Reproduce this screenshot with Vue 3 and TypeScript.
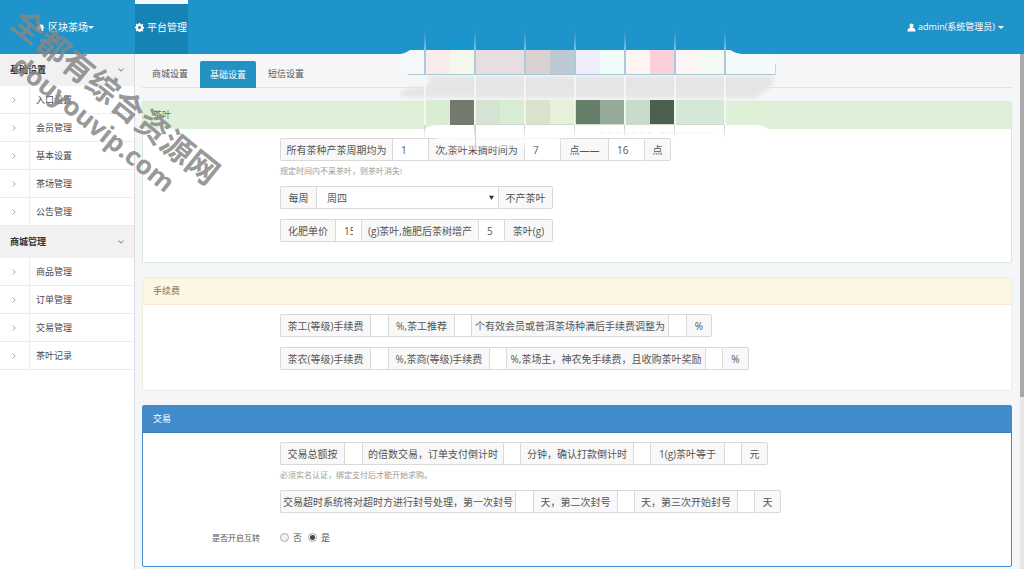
<script setup lang="ts">
import { reactive, ref } from 'vue'

interface MenuGroup { title: string; items: string[] }
interface Segment { kind: 'addon' | 'input' | 'select'; text: string; label?: string }
interface Row { id: string; segments: Segment[]; help?: string }
interface Panel { id: string; title: string; rows: Row[] }

const menu: MenuGroup[] = [
  { title: '基础设置', items: ['入口设置', '会员管理', '基本设置', '茶场管理', '公告管理'] },
  { title: '商城管理', items: ['商品管理', '订单管理', '交易管理', '茶叶记录'] },
]

const tabs = ['商城设置', '基础设置', '短信设置']
const activeTab = ref('基础设置')
const transfer = ref('yes')

const a = (text: string): Segment => ({ kind: 'addon', text })
const i = (label: string, text = ''): Segment => ({ kind: 'input', text, label })

const panels = reactive<Panel[]>([
  {
    id: 'tea',
    title: '茶叶',
    rows: [
      {
        id: 'cycle',
        segments: [a('所有茶种产茶周期均为'), i('产茶周期', '1'), a('次,茶叶采摘时间为'), i('开始时间', '7'), a('点——'), i('结束时间', '16'), a('点')],
        help: '规定时间内不采茶叶，则茶叶消失!',
      },
      { id: 'weekday', segments: [a('每周'), { kind: 'select', text: '周四', label: '每周' }, a('不产茶叶')] },
      { id: 'manure', segments: [a('化肥单价'), i('化肥单价', '15'), a('(g)茶叶,施肥后茶树增产'), i('增产', '5'), a('茶叶(g)')] },
    ],
  },
  {
    id: 'fee',
    title: '手续费',
    rows: [
      { id: 'worker', segments: [a('茶工(等级)手续费'), i('茶工手续费'), a('%,茶工推荐'), i('茶工推荐'), a('个有效会员或普洱茶场种满后手续费调整为'), i('调整手续费'), a('%')] },
      { id: 'farmer', segments: [a('茶农(等级)手续费'), i('茶农手续费'), a('%,茶商(等级)手续费'), i('茶商手续费'), a('%,茶场主，神农免手续费，且收购茶叶奖励'), i('收购奖励'), a('%')] },
    ],
  },
  {
    id: 'trade',
    title: '交易',
    rows: [
      {
        id: 'multiple',
        segments: [a('交易总额按'), i('交易倍数'), a('的倍数交易，订单支付倒计时'), i('支付倒计时'), a('分钟，确认打款倒计时'), i('打款倒计时'), a('1(g)茶叶等于'), i('茶叶单价'), a('元')],
        help: '必须实名认证，绑定支付后才能开始求购。',
      },
      { id: 'ban', segments: [a('交易超时系统将对超时方进行封号处理，第一次封号'), i('第一次封号'), a('天，第二次封号'), i('第二次封号'), a('天，第三次开始封号'), i('第三次封号'), a('天')] },
    ],
  },
])

const weekdays = ['周一', '周二', '周三', '周四', '周五', '周六', '周日']

const topCells = [
  [425, 25, '#f8eced'], [450, 25, '#f3f7ec'], [475, 50, '#e8dee1'], [525, 25, '#d9d0d2'],
  [550, 25, '#bdc8d2'], [575, 25, '#efeefb'], [600, 25, '#f1fbfa'], [625, 25, '#fef5f3'],
  [650, 25, '#fccfda'], [675, 25, '#fdf4f5'], [700, 25, '#f5f9f3'], [725, 50, '#f5f9f9'],
] as const
const lowCells = [
  [425, 25, '#daedd2'], [450, 24, '#737a6e'], [475, 25, '#d5e3d2'], [500, 25, '#d9edd5'],
  [525, 25, '#dae1cc'], [550, 25, '#e6f1da'], [575, 25, '#667f68'], [600, 24, '#97aa99'],
  [625, 25, '#c8dcc9'], [650, 24, '#4c6050'], [675, 50, '#d5e8d6'],
] as const
const gridLines = [425, 475, 525, 575, 625, 675, 725]
</script>

<template>
  <div class="page">
    <header class="topbar">
      <a href="#" class="brand">
        <svg class="icon" viewBox="0 0 18 18"><path d="M9 2 1 9.4l1.2 1.3L3.4 9.600V16h4v-4.500h3.200V16h4V9.600l1.200 1.100L17 9.400l-2.500-2.300V3h-2.300v2z" /></svg>
        <span>区块茶场</span><i class="caret"></i>
      </a>
      <nav class="mainnav">
        <a href="#" class="current">
          <svg class="icon" viewBox="0 0 18 18"><path fill-rule="evenodd" d="M7.500 0h3l.5 2.500 1.500.7 2.200-1.500 2 2.100-1.400 2.100.6 1.600 2.100.5v3l-2.100.5-.7 1.500 1.500 2.200-2.100 2.100-2.100-1.500-1.500.7-.5 2.100h-3L7 16l-1.500-.7-2.200 1.500-2.100-2.100 1.500-2.200L2 11 0 10.500v-3L2.200 7l.6-1.500-1.500-2.200 2.100-2.100 2.100 1.500L7 2zM9 6a3 3 0 1 0 0 6 3 3 0 0 0 0-6z" /></svg>
          <span>平台管理</span>
        </a>
      </nav>
      <a href="#" class="user">
        <svg class="icon" viewBox="0 0 18 18"><path d="M9 1c-2.600 0-4 1.800-4 4.200 0 1.900.8 3.600 1.800 4.500C3.500 10 1 11.500 1 17h16c0-5.500-2.500-7-5.800-7.300 1-.9 1.800-2.600 1.800-4.500C13 2.800 11.600 1 9 1z" /></svg>
        <span>admin(系统管理员)</span><i class="caret"></i>
      </a>
    </header>

    <div class="body">
      <aside class="sidebar">
        <section v-for="g in menu" :key="g.title">
          <button type="button" class="group">
            <span>{{ g.title }}</span>
            <svg class="chev" viewBox="0 0 8 8"><path d="M1.500 2.500 4 5.200l2.500-2.700" /></svg>
          </button>
          <ul>
            <li v-for="item in g.items" :key="item">
              <a href="#">
                <span class="mark"><svg class="chev" viewBox="0 0 8 8"><path d="M2.500 1.500 5.200 4 2.500 6.500" /></svg></span>
                <span class="name">{{ item }}</span>
              </a>
            </li>
          </ul>
        </section>
      </aside>

      <main class="content">
        <nav class="tabs">
          <button v-for="t in tabs" :key="t" type="button" :class="{ active: t === activeTab }" @click="activeTab = t">{{ t }}</button>
        </nav>

        <form class="panels" @submit.prevent>
          <section v-for="p in panels" :key="p.id" class="panel" :class="p.id">
            <h2>{{ p.title }}</h2>
            <div class="fields">
              <div v-for="r in p.rows" :key="r.id" class="row">
                <div class="segments" :class="r.id">
                  <template v-for="(s, n) in r.segments" :key="n">
                    <span v-if="s.kind === 'addon'" class="addon">{{ s.text }}</span>
                    <input v-else-if="s.kind === 'input'" v-model="s.text" type="text" :aria-label="s.label" />
                    <span v-else class="pick">
                      <select v-model="s.text" :aria-label="s.label">
                        <option v-for="d in weekdays" :key="d">{{ d }}</option>
                      </select>
                      <svg viewBox="0 0 6 6"><path d="M0 1h6L3 6z" /></svg>
                    </span>
                  </template>
                </div>
                <p v-if="r.help" class="help">{{ r.help }}</p>
              </div>
              <div v-if="p.id === 'trade'" class="row radios" role="radiogroup" aria-labelledby="transfer-label">
                <span id="transfer-label" class="caption">是否开启互转</span>
                <label><input v-model="transfer" type="radio" name="transfer" value="no" />否</label>
                <label><input v-model="transfer" type="radio" name="transfer" value="yes" />是</label>
              </div>
            </div>
          </section>
        </form>
      </main>

      <div class="scrollbar"><div class="thumb"></div></div>
    </div>

    <svg class="mosaic" viewBox="400 25 380 130" aria-hidden="true">
      <defs>
        <linearGradient id="rise" x1="0" y1="0" x2="0" y2="1">
          <stop offset="0" stop-color="#7cc4e4" stop-opacity="0" />
          <stop offset="1" stop-color="#a5d8ee" />
        </linearGradient>
        <linearGradient id="drop" x1="0" y1="0" x2="0" y2="1">
          <stop offset="0" stop-color="#ccc" />
          <stop offset="1" stop-color="#ccc" stop-opacity="0" />
        </linearGradient>
        <filter id="soft"><feGaussianBlur stdDeviation="2" /></filter>
      </defs>
      <path d="M400 54Q404 54 410 50H730Q736 54 742 54V74H400z" fill="#f5f7f8" />
      <path d="M425 76H774Q774 88 755 98H530L405 97Q390 94 412 88Q440 86 425 76z" fill="#e5e5e6" filter="url(#soft)" />
      <rect x="450" y="37" width="25" height="13" fill="#1698d0" opacity=".6" />
      <rect v-for="c in topCells.slice(0, -1)" :key="'t' + c[0]" :x="c[0]" y="50" :width="c[1]" height="24" :fill="c[2]" />
      <path d="M725 50h5q6 4 12 4h33v20h-50z" fill="#f5f9f9" />
      <path d="M408 74h367v1H408z" fill="#a9c9d8" />
      <path d="M775 64h1v11h-1z" fill="#c6d9e2" />
      <rect v-for="c in lowCells" :key="'l' + c[0]" :x="c[0]" y="100" :width="c[1]" height="25" :fill="c[2]" />
      <path d="M425 130Q428 125 440 125H755Q765 125 770 130z" fill="#fff" />
      <path d="M437 132H560V143Q510 148 475 147Q445 147 437 140z" fill="#fff" opacity=".75" filter="url(#soft)" />
      <path d="M475 124h250v1H475z" fill="#cfdacb" />
      <g v-for="x in gridLines" :key="x">
        <rect :x="x - 1" y="30" width="2" height="20" fill="url(#rise)" opacity=".7" />
        <rect :x="x - 1" y="50" width="2" height="24" fill="#a9cbdb" />
        <rect :x="x - 1" y="75" width="2" height="50" fill="#f6f9f5" opacity=".8" />
        <rect :x="x - 1" y="125" width="1" height="15" fill="url(#drop)" />
      </g>
      <path d="M475 125h1v24h-1z" fill="#d2d2d2" />
      <path d="M600 133h52M660 133h56" stroke="#eee" stroke-dasharray="5 3" />
    </svg>

    <div class="watermark">
      <div class="mark-name">全都有综合资源网</div>
      <div class="mark-site">douyouvip.com</div>
    </div>
  </div>
</template>

<style>
body {
  margin: 0;
}
</style>

<style scoped>
* {
  box-sizing: border-box;
}
.page {
  position: relative;
  display: flex;
  flex-direction: column;
  min-height: 100vh;
  overflow: hidden;
  background: #f5f6f7;
  color: #555;
  font: 9px/14px "Open Sans", "Noto Sans CJK SC", sans-serif;
}
button, input, select {
  margin: 0;
  font: inherit;
  color: inherit;
  border-radius: 0;
}
a {
  color: inherit;
  text-decoration: none;
}
.topbar {
  display: flex;
  height: 54px;
  background: #1e94ca;
  color: #fff;
}
.topbar a {
  display: flex;
  align-items: center;
}
.icon {
  width: 9px;
  height: 9px;
  margin-right: 3px;
  fill: currentColor;
}
.caret {
  border: 3px solid transparent;
  border-top-color: currentColor;
  border-bottom: 0;
}
.brand {
  width: 135px;
  padding-left: 36px;
  font-size: 10px;
}
.mainnav {
  display: flex;
  flex: 1;
  font-size: 10px;
}
.current {
  border-top: 4px solid #f2fafd;
  padding-right: 1px;
  padding-bottom: 4px;
  background: #1583b3;
}
.user {
  padding-right: 20px;
}
.user .icon {
  margin-right: 2px;
}
.user .caret {
  margin-left: 3px;
}
.body {
  display: flex;
  flex: 1;
}
.sidebar {
  width: 135px;
  background: #fff;
  border-right: 1px solid #dcdcdf;
}
.group {
  display: flex;
  align-items: center;
  justify-content: space-between;
  width: 100%;
  height: 32px;
  padding: 0 9px 0 10px;
  border: 0;
  background: #f1f1f2;
  font-weight: bold;
  color: #333;
}
.chev {
  width: 8px;
  height: 8px;
  fill: none;
  stroke: #777;
}
ul {
  margin: 0;
  padding: 0;
  list-style: none;
}
li a {
  display: flex;
  height: 28px;
  border-bottom: 1px solid #ececee;
  color: #444a55;
}
.mark {
  display: flex;
  align-items: center;
  width: 30px;
  padding-left: 10px;
  border-right: 1px solid #ececf0;
}
.mark .chev {
  stroke: #aaa;
}
.name {
  display: flex;
  align-items: center;
  padding-left: 6px;
}
.content {
  flex: 1;
  min-width: 0;
  padding: 7px 7px 2px;
}
.tabs {
  display: flex;
  height: 27px;
  border-bottom: 1px solid #dfe1e3;
}
.tabs button {
  padding: 0 10px;
  border: 0;
  margin-right: 2px;
  background: none;
  border-radius: 2px 2px 0 0;
}
.tabs .active {
  height: 27px;
  background: #2391c2;
  color: #fff;
}
.panels {
  display: grid;
  gap: 14px;
  padding-top: 13px;
}
.panel {
  background: #fff;
  border: 1px solid #dce8d6;
  border-radius: 2px;
}
.panel h2 {
  height: 27px;
  margin: 0;
  padding: 0 10px;
  border-bottom: 1px solid #dff0d8;
  background: #dff0d8;
  color: #5b7a58;
  font: inherit;
  line-height: 26px;
}
.fee {
  border-color: #f3ecdc;
}
.fee h2 {
  background: #fdf6e3;
  border-color: #faebcc;
  color: #8a7350;
}
.trade {
  border-color: #428bca;
}
.trade h2 {
  background: #428bca;
  border-color: #3c80bb;
  color: #fff;
}
.fields {
  display: grid;
  gap: 10px;
  padding: 9px 10px 20px 137px;
}
.trade .fields {
  padding-bottom: 14px;
}
.segments {
  display: grid;
  justify-content: start;
  height: 23px;
  font-size: 10px;
}
.cycle {
  grid-template-columns: 112px 36px 96px 36px 48px 36px 27px;
}
.weekday {
  grid-template-columns: 36px 182px 55px;
}
.manure {
  grid-template-columns: 55px 26px 117px 26px 49px;
}
.worker {
  grid-template-columns: 90px 18px 66px 17px 197px 18px 26px;
}
.farmer {
  grid-template-columns: 90px 18px 101px 17px 199px 17px 27px;
}
.multiple {
  grid-template-columns: 64px 18px 141px 17px 113px 17px 74px 17px 27px;
}
.ban {
  grid-template-columns: 235px 18px 84px 17px 103px 17px 27px;
}
.addon, .segments input, .pick {
  min-width: 0;
  border: 1px solid #d9d9d9;
  border-right: 0;
}
.addon {
  display: flex;
  align-items: center;
  justify-content: center;
  background: #f8f8f8;
  white-space: nowrap;
}
.addon:first-child {
  border-radius: 2px 0 0 2px;
}
.addon:last-child {
  border-right: 1px solid #d9d9d9;
  border-radius: 0 2px 2px 0;
}
.segments input {
  padding: 0 8px;
  background: #fff;
}
.pick {
  position: relative;
  display: flex;
  background: #fff;
}
.pick select {
  flex: 1;
  padding: 0 10px;
  border: 0;
  appearance: none;
  background: none;
}
.pick svg {
  position: absolute;
  top: 8px;
  right: 4px;
  width: 5px;
  height: 5px;
  fill: #333;
  pointer-events: none;
}
.help {
  margin: 3px 0 -1px;
  font-size: 8px;
  line-height: 13px;
  color: #999;
}
.radios {
  display: flex;
  align-items: center;
  height: 29px;
  margin-left: -117px;
}
.caption {
  width: 97px;
  margin-right: 20px;
  text-align: right;
  font-size: 8px;
}
.radios label {
  display: flex;
  align-items: center;
  gap: 4px;
  margin-right: 6px;
}
.radios input {
  width: 9px;
  height: 9px;
  appearance: none;
  border: 1px solid #aaa;
  border-radius: 50%;
  background: #f4f4f4;
}
.radios input:checked {
  background: radial-gradient(circle, #444 2px, #f4f4f4 3px);
}
.scrollbar {
  width: 4px;
  margin-left: 1px;
  background: #e6e6e6;
}
.thumb {
  height: 343px;
  background: #a9a9ab;
}
.mosaic {
  position: absolute;
  top: 25px;
  left: 400px;
  width: 380px;
  height: 130px;
  pointer-events: none;
}
.watermark {
  position: absolute;
  top: 75px;
  left: -35px;
  width: 280px;
  transform: rotate(39deg);
  text-align: center;
  font-weight: bold;
  line-height: 35px;
  color: rgba(135, 135, 135, 0.85);
  white-space: nowrap;
  pointer-events: none;
}
.mark-name {
  font-size: 32px;
}
.mark-site {
  font-size: 26px;
}
</style>
